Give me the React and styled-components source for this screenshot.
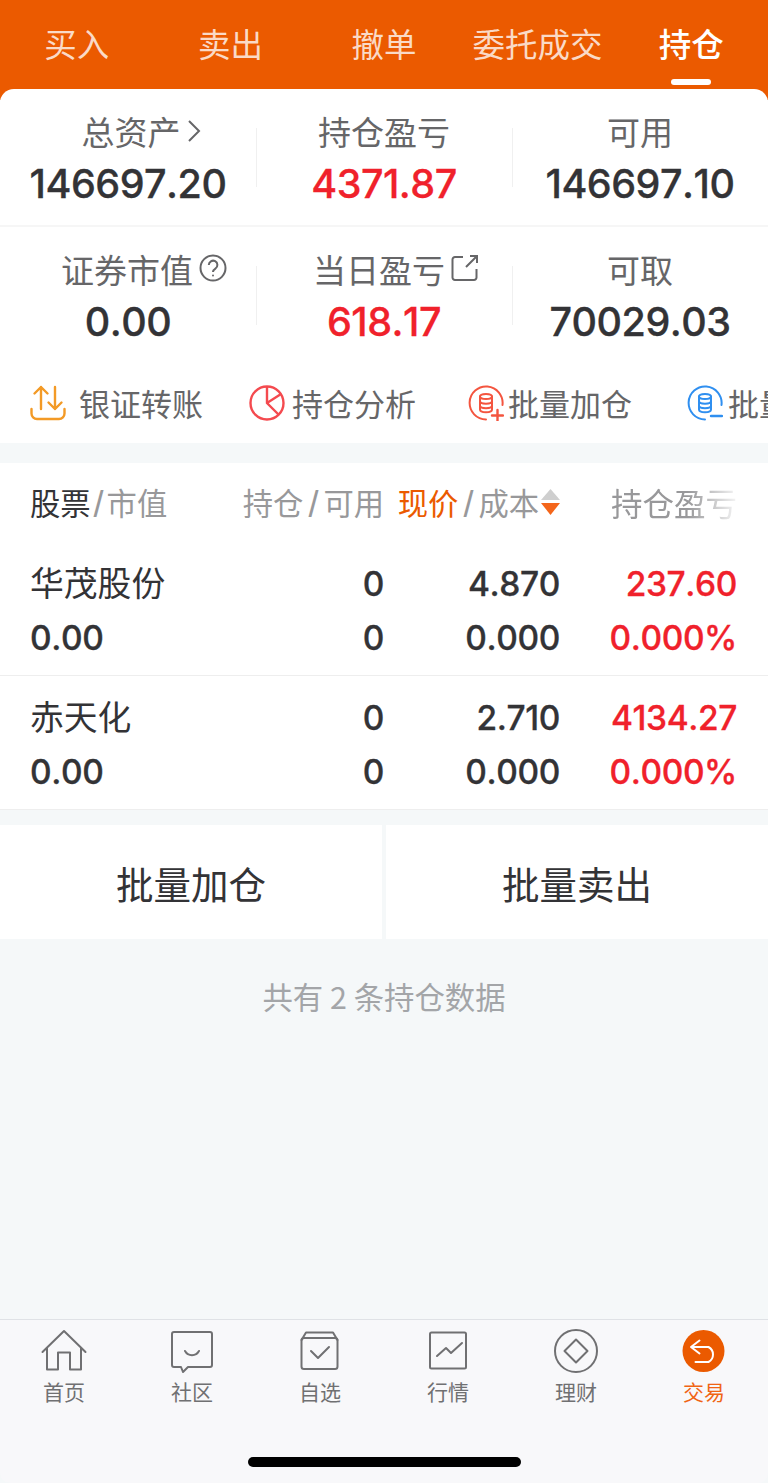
import React from "react";
import styled, { createGlobalStyle } from "styled-components";

const CJK = `"Noto Sans CJK SC", "Noto Sans", sans-serif`;
const NUM = `Inter, "Liberation Sans", "Noto Sans CJK SC", sans-serif`;
const ORANGE = "#eb5a00";
const RED = "#f0212b";
const INK = "#333336";

const Global = createGlobalStyle`
  html, body { margin: 0; padding: 0; background: #fff; }
  * { box-sizing: border-box; }
  body { font-family: ${CJK}; }
`;

const Page = styled.div`
  width: 768px; height: 1483px; display: flex; flex-direction: column;
  background: #f5f8f9; overflow: hidden;
`;
const Header = styled.nav`
  height: 100px; background: ${ORANGE}; display: grid; grid-template-columns: repeat(5, 1fr);
`;
const HeadTab = styled.div`
  display: flex; flex-direction: column; align-items: center; padding-top: 20px;
  font-size: 32.5px; line-height: 46px; white-space: nowrap;
  font-weight: ${p => (p.$active ? 500 : 400)};
  color: ${p => (p.$active ? "#fff" : "rgba(255,255,255,.78)")};
`;
const HeadMark = styled.span`
  width: 40px; height: 6px; border-radius: 3px; background: #fff; margin-top: 13px;
`;
const Card = styled.section`
  margin-top: -11px; background: #fff; border-radius: 14px 14px 0 0; position: relative;
`;
const StatRow = styled.div`
  height: 138px; display: grid; grid-template-columns: repeat(3, 256px);
  padding-top: 18px; border-bottom: ${p => (p.$line ? "2px solid #f6f6f6" : "0")};
`;
const Stat = styled.div`
  position: relative; display: flex; flex-direction: column; align-items: center;
  & + &::before {
    content: ""; position: absolute; left: 0; top: 21px; height: 59px; width: 1px; background: #f0f0f0;
  }
`;
const StatLabel = styled.div`
  font-size: 33px; line-height: 48px; color: #666668; position: relative; white-space: nowrap;
  margin-left: ${p => p.$shift || 0}px;
`;
const LabelIcon = styled.svg`
  position: absolute; left: 100%; top: ${p => p.$top || 9}px; margin-left: ${p => p.$gap || 6}px;
`;
const StatValue = styled.div`
  font-family: ${NUM}; font-weight: 500; font-size: 39.5px; letter-spacing: -0.5px; line-height: 50px; margin-top: 4px;
  font-kerning: none; -webkit-text-stroke: 0.3px currentColor;
  color: ${p => (p.$red ? RED : INK)}; white-space: nowrap;
`;
const Tools = styled.div`
  height: 78px; display: grid; grid-auto-flow: column; grid-auto-columns: 219px;
  padding: 0 0 0 30px; overflow: hidden;
`;
const Tool = styled.div`
  display: flex; align-items: center; gap: ${p => p.$gap}px; white-space: nowrap;
  font-size: 31px; color: #666668; margin-top: -2px;
`;
const ToolText = styled.span`
  position: relative; top: -1px;
`;
const Gap = styled.div`
  height: ${p => p.$h}px; flex: none;
`;
const Table = styled.section`
  background: #fff;
`;
const Grid = styled.div`
  display: grid; grid-template-columns: 200px 154px 176px 177px; padding: 0 31px 0 30px;
`;
const TableHead = styled(Grid)`
  height: 79px; align-items: center; font-size: 30.3px; color: #98989a; white-space: nowrap;
`;
const HeadCell = styled.div`
  display: flex; align-items: center; position: relative; top: -1px;
  justify-content: ${p => (p.$right ? "flex-end" : "flex-start")};
  ${p => p.$fade && "font-size: 31.5px; -webkit-mask-image: linear-gradient(90deg,#000 72%,rgba(0,0,0,.1) 100%); mask-image: linear-gradient(90deg,#000 72%,rgba(0,0,0,.1) 100%);"}
`;
const Strong = styled.span`
  color: ${p => (p.$orange ? ORANGE : INK)};
`;
const Slash = styled.span`
  margin: 0 ${p => (p.$tight ? 3 : 5)}px; font-family: "Liberation Sans", sans-serif; font-size: 36px; line-height: 1; color: #98989a;
  position: relative; top: 3px;
`;
const SortMark = styled.svg`
  flex: none; margin-left: 1px; margin-right: -1px;
`;
const Row = styled(Grid)`
  height: 134px; padding-top: 14px; padding-bottom: 12px; border-bottom: 1px solid #eeeeee;
`;
const Line = styled.div`
  height: 54px; line-height: 56px; white-space: nowrap; font-family: ${NUM}; font-weight: 500;
  font-size: 33.5px; letter-spacing: -0.4px; font-kerning: none; -webkit-text-stroke: 0.3px currentColor;
  text-align: ${p => (p.$left ? "left" : "right")};
  color: ${p => (p.$red ? RED : INK)};
`;
const Name = styled(Line)`
  font-family: ${CJK}; font-weight: 400; font-size: 33.8px; letter-spacing: 0; line-height: 52px;
  -webkit-text-stroke: 0;
`;
const Col = styled.div`
  display: flex; flex-direction: column;
`;
const Buttons = styled.div`
  display: grid; grid-template-columns: 1fr 1fr; gap: 4px;
`;
const Btn = styled.div`
  height: 114px; background: #fff; display: flex; align-items: center; justify-content: center;
  font-size: 37.5px; color: #333336;
`;
const Note = styled.div`
  text-align: center; font-size: 30.4px; line-height: 40px; color: #a3a5a8; padding-top: 37px; flex: 1;
`;
const TabBar = styled.nav`
  height: 164px; flex: none; background: #f8f8fa; border-top: 1px solid #dfe2e6;
  border-radius: 0 0 10px 10px; display: flex; flex-direction: column;
`;
const TabRow = styled.div`
  display: grid; grid-template-columns: repeat(6, 128px); height: 137px;
`;
const TabItem = styled.div`
  display: flex; flex-direction: column; align-items: center; padding-top: 9px;
  font-size: 21px; line-height: 30px; color: ${p => (p.$active ? "#f06414" : "#707072")};
`;
const TabIcon = styled.svg`
  display: block; width: 48px; height: 48px; margin-bottom: -1px;
`;
const HomeBar = styled.div`
  width: 273px; height: 10px; border-radius: 5px; background: #000; align-self: center;
`;

const Cylinder = ({ c }) => (
  <g fill="none" stroke={c} strokeWidth="2">
    <ellipse cx="18" cy="11.5" rx="6" ry="2.6" />
    <path d="M12 11.5v13c0 1.6 2.7 2.8 6 2.8s6-1.2 6-2.8v-13M12 16c0 1.5 2.7 2.7 6 2.7s6-1.2 6-2.7M12 20.5c0 1.5 2.7 2.7 6 2.7s6-1.2 6-2.7" />
  </g>
);

const IconTransfer = () => (
  <svg width="36" height="36" viewBox="0 0 36 36" fill="none" stroke="#f39a26" strokeWidth="2.4" strokeLinecap="round" strokeLinejoin="round">
    <path d="M1.5 24v4.5a5.5 5.5 0 0 0 5.5 5.5h22a5.5 5.5 0 0 0 5.5-5.5V24" />
    <path d="M11 24V2M4.5 8.5 11 2l6.5 6.500M25 2v22M18.500 17.500 25 24l6.500-6.500" />
  </svg>
);
const IconPie = () => (
  <svg width="36" height="36" viewBox="0 0 36 36" fill="none" stroke="#f44a4f" strokeWidth="2.4">
    <circle cx="18" cy="18" r="16.500" />
    <path d="M18 2v16l11.500 11.500M18 18 32 9" />
  </svg>
);
const IconAdd = () => (
  <svg width="36" height="36" viewBox="0 0 36 36" fill="none" strokeWidth="2" strokeLinecap="round">
    <path d="M34.500 20A16.500 16.500 0 1 0 18 34.500" stroke="#f4553f" />
    <Cylinder c="#f4553f" />
    <path d="M24 30.500h11M29.500 25v11" stroke="#f4553f" strokeWidth="2.400" />
  </svg>
);
const IconMinus = () => (
  <svg width="36" height="36" viewBox="0 0 36 36" fill="none" strokeWidth="2" strokeLinecap="round">
    <path d="M34.500 20A16.500 16.500 0 1 0 18 34.500" stroke="#2f8ff0" />
    <Cylinder c="#2f8ff0" />
    <path d="M24 31h11" stroke="#2f8ff0" strokeWidth="2.400" />
  </svg>
);

const stroke = { fill: "none", stroke: "#707072", strokeWidth: 2, strokeLinejoin: "round", strokeLinecap: "round" };
const tabs = [
  { t: "首页", d: <g {...stroke}><path d="M2.500 23 24 2l21.500 21M7 19v21.500h11v-17h12v17h11V19" /></g> },
  { t: "社区", d: <g {...stroke}><path d="M6 3h36a2 2 0 0 1 2 2v31a2 2 0 0 1-2 2H20l-5 5-2-5H6a2 2 0 0 1-2-2V5a2 2 0 0 1 2-2z" /><path d="M17 22c3 5.500 11 5.500 14 0" /></g> },
  { t: "自选", d: <g {...stroke}><rect x="5.500" y="9" width="36" height="31" rx="2.500" /><path d="M5.500 11 10 3.500h27L41.500 11M15 22l7 7 11-11" /></g> },
  { t: "行情", d: <g {...stroke}><rect x="6" y="3.500" width="36" height="36" rx="1.500" /><path d="M13 27l9-8 5 5 11-10" /></g> },
  { t: "理财", d: <g {...stroke}><circle cx="24" cy="22" r="21" /><path d="M24 10.500 35.500 22 24 33.500 12.500 22z" /></g> },
  { t: "交易", active: true, d: <g><circle cx="23.500" cy="22" r="21" fill="#eb5a00" /><path d="M19.500 11.500 11 18l8.500 6.500M11.500 18h17a8.500 8.500 0 0 1 0 15h-13" fill="none" stroke="#fff" strokeWidth="2" strokeLinecap="round" strokeLinejoin="round" /></g> },
];

const rows = [
  ["华茂股份", "0.00", "0", "0", "4.870", "0.000", "237.60", "0.000%"],
  ["赤天化", "0.00", "0", "0", "2.710", "0.000", "4134.27", "0.000%"],
];

export default function App() {
  return (
    <Page>
      <Global />
      <Header>
        {["买入", "卖出", "撤单", "委托成交"].map(t => <HeadTab key={t}>{t}</HeadTab>)}
        <HeadTab $active>持仓<HeadMark /></HeadTab>
      </Header>
      <Card>
        <StatRow $line>
          <Stat>
            <StatLabel $shift={6}>总资产
              <LabelIcon $top={12} $gap={6} width="14" height="24" viewBox="0 0 14 24" fill="none" stroke="#666668" strokeWidth="2"><path d="M2 2l10 10L2 22" /></LabelIcon>
            </StatLabel>
            <StatValue>146697.20</StatValue>
          </Stat>
          <Stat><StatLabel>持仓盈亏</StatLabel><StatValue $red>4371.87</StatValue></Stat>
          <Stat><StatLabel>可用</StatLabel><StatValue>146697.10</StatValue></Stat>
        </StatRow>
        <StatRow>
          <Stat>
            <StatLabel $shift={-2}>证券市值
              <LabelIcon $top={9} width="28" height="28" viewBox="0 0 28 28" fill="none" stroke="#666668" strokeWidth="2">
                <circle cx="14" cy="14" r="12.500" />
                <path d="M9.800 11a4.300 4.300 0 1 1 6.600 3.600c-1.500 1-2.400 1.900-2.400 3.400" />
                <circle cx="14" cy="21.500" r="1" fill="#666668" stroke="none" />
              </LabelIcon>
            </StatLabel>
            <StatValue>0.00</StatValue>
          </Stat>
          <Stat>
            <StatLabel $shift={-10}>当日盈亏
              <LabelIcon $top={9} width="28" height="28" viewBox="0 0 28 28" fill="none" stroke="#666668" strokeWidth="2">
                <path d="M12 3H4a2.500 2.500 0 0 0-2.500 2.500v18A2.500 2.500 0 0 0 4 26h19a2.500 2.500 0 0 0 2.500-2.500V15M15 13 26 2M19 2h7v7" />
              </LabelIcon>
            </StatLabel>
            <StatValue $red>618.17</StatValue>
          </Stat>
          <Stat><StatLabel>可取</StatLabel><StatValue>70029.03</StatValue></Stat>
        </StatRow>
        <Tools>
          <Tool $gap={13}><IconTransfer /><ToolText>银证转账</ToolText></Tool>
          <Tool $gap={7}><IconPie /><ToolText>持仓分析</ToolText></Tool>
          <Tool $gap={4}><IconAdd /><ToolText>批量加仓</ToolText></Tool>
          <Tool $gap={5}><IconMinus /><ToolText>批量卖出</ToolText></Tool>
        </Tools>
      </Card>
      <Gap $h={20} />
      <Table>
        <TableHead>
          <HeadCell><Strong>股票</Strong><Slash $tight>/</Slash>市值</HeadCell>
          <HeadCell $right>持仓<Slash>/</Slash>可用</HeadCell>
          <HeadCell $right>
            <Strong $orange>现价</Strong><Slash>/</Slash>成本
            <SortMark width="21" height="28" viewBox="0 0 21 28">
              <path d="M10.500 1l9.500 11H1z" fill="#cfcfcf" />
              <path d="M1 15h19l-9.500 12z" fill="#f4661b" />
            </SortMark>
          </HeadCell>
          <HeadCell $right $fade>持仓盈亏</HeadCell>
        </TableHead>
        {rows.map(r => (
          <Row key={r[0]}>
            <Col><Name $left>{r[0]}</Name><Line $left>{r[1]}</Line></Col>
            <Col><Line>{r[2]}</Line><Line>{r[3]}</Line></Col>
            <Col><Line>{r[4]}</Line><Line>{r[5]}</Line></Col>
            <Col><Line $red>{r[6]}</Line><Line $red>{r[7]}</Line></Col>
          </Row>
        ))}
      </Table>
      <Gap $h={15} />
      <Buttons><Btn>批量加仓</Btn><Btn>批量卖出</Btn></Buttons>
      <Note>共有 2 条持仓数据</Note>
      <TabBar>
        <TabRow>
          {tabs.map(t => (
            <TabItem key={t.t} $active={t.active}>
              <TabIcon viewBox="0 0 48 48">{t.d}</TabIcon>
              {t.t}
            </TabItem>
          ))}
        </TabRow>
        <HomeBar />
      </TabBar>
    </Page>
  );
}
